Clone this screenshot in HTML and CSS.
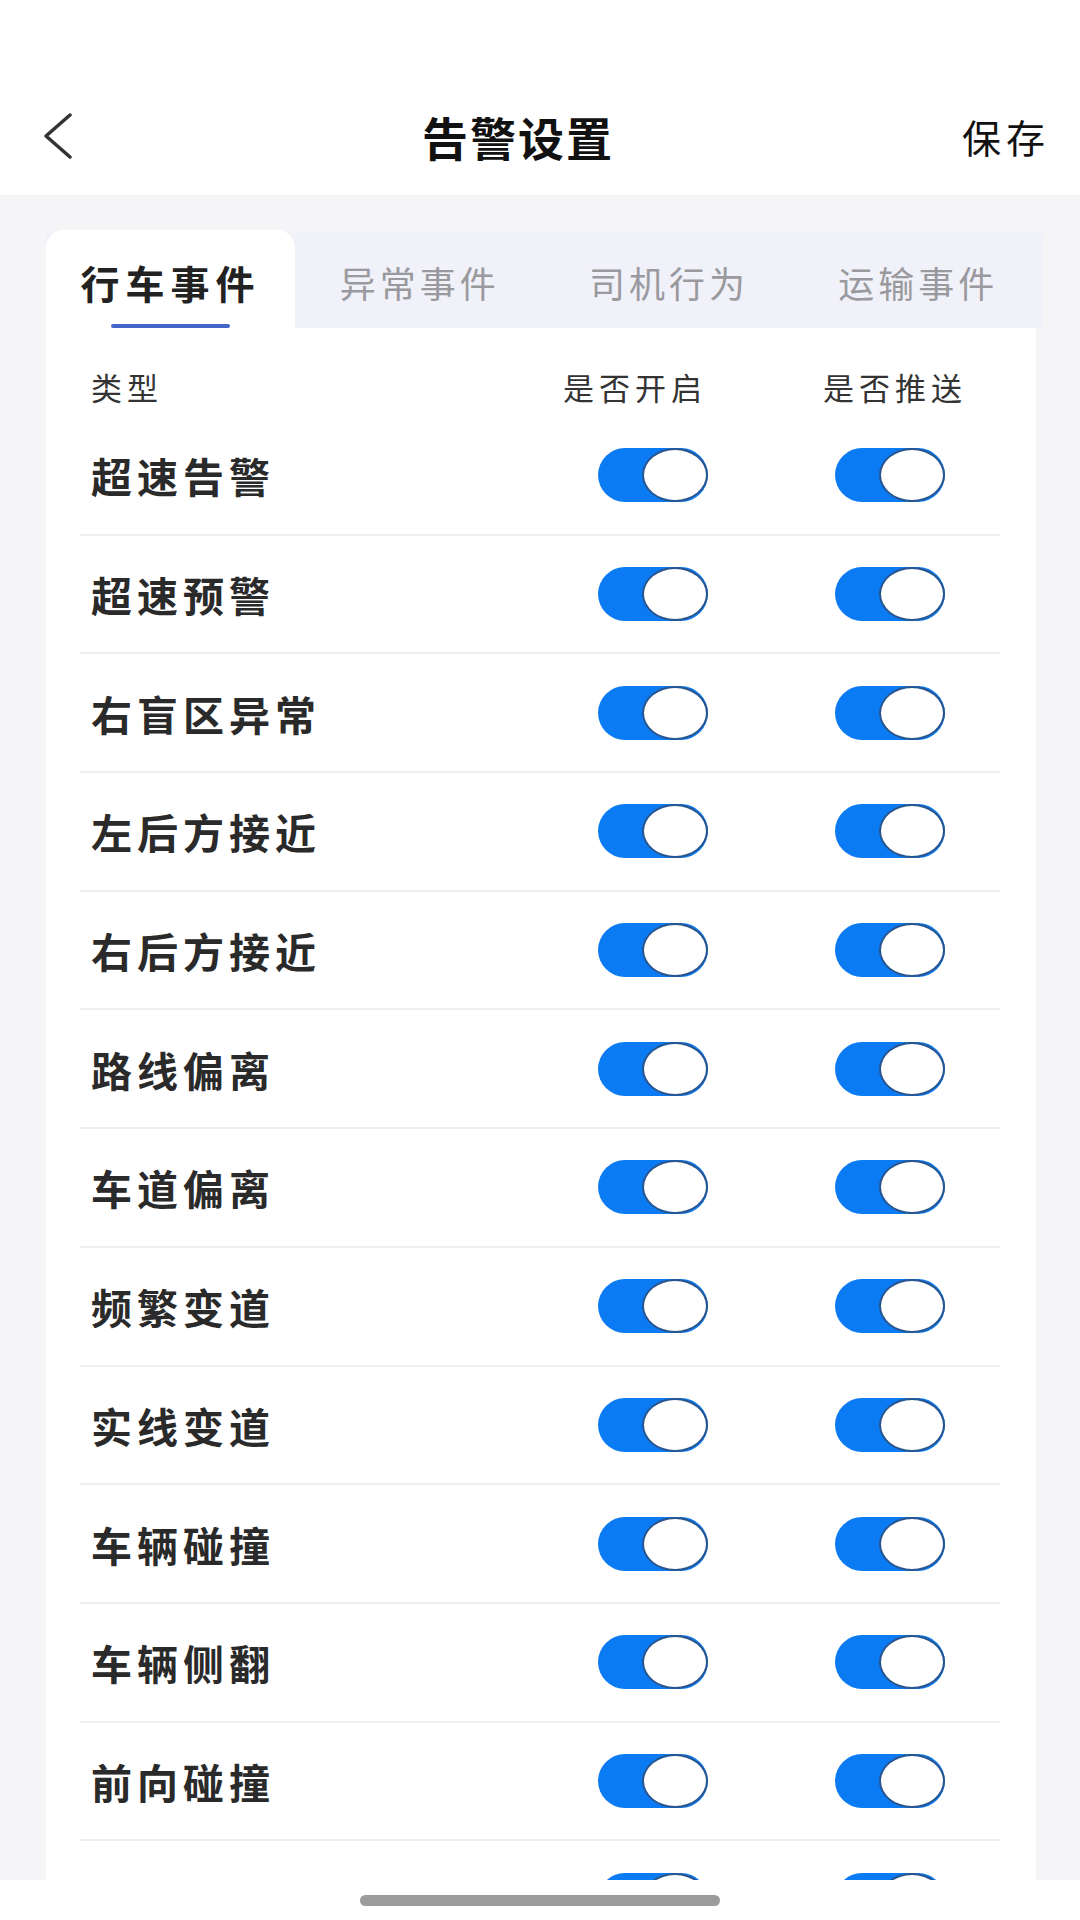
FILE: index.html
```html
<!DOCTYPE html>
<html lang="zh-CN">
<head>
    <meta charset="UTF-8">
    <title>告警设置</title>
    <link rel="stylesheet" href="styles.css">
</head>
<body>
    <div id="header">
        <svg class="back" width="30" height="48" viewBox="0 0 30 48">
            <polyline points="26,3 2,24 26,45" fill="none" stroke="#333" stroke-width="3.5" stroke-linecap="round" stroke-linejoin="round"/>
        </svg>
        <div id="title">告警设置</div>
        <div id="save">保存</div>
    </div>

    <div id="content">
        <div id="tabs">
            <div class="tab active"><span class="tab-label">行车事件</span><span class="tab-bar"></span></div>
            <div class="tab"><span class="tab-label">异常事件</span><span class="tab-bar"></span></div>
            <div class="tab"><span class="tab-label">司机行为</span><span class="tab-bar"></span></div>
            <div class="tab"><span class="tab-label">运输事件</span><span class="tab-bar"></span></div>
        </div>
        <div id="card">
            <div class="list-head">
                <span>类型</span>
                <span>是否开启</span>
                <span>是否推送</span>
            </div>
            <ul id="list"></ul>
        </div>
    </div>

    <div id="home"><span class="home-bar"></span></div>

    <script>
        const events = [
            '超速告警', '超速预警', '右盲区异常', '左后方接近', '右后方接近',
            '路线偏离', '车道偏离', '频繁变道', '实线变道', '车辆碰撞',
            '车辆侧翻', '前向碰撞', ''
        ];

        function makeSwitch() {
            const sw = document.createElement('span');
            sw.classList.add('switch', 'on');
            const knob = document.createElement('span');
            knob.classList.add('knob');
            sw.appendChild(knob);
            sw.onclick = () => sw.classList.toggle('on');
            return sw;
        }

        const list = document.getElementById('list');
        events.forEach(name => {
            const li = document.createElement('li');
            li.classList.add('row');
            const label = document.createElement('span');
            label.classList.add('row-name');
            label.textContent = name;
            li.appendChild(label);
            li.appendChild(makeSwitch());
            li.appendChild(makeSwitch());
            list.appendChild(li);
        });
    </script>
</body>
</html>
```

FILE: styles.css
```css
body {
    margin: 0;
    width: 1080px;
    height: 1920px;
    display: flex;
    flex-direction: column;
    overflow: hidden;
    background-color: #f5f5f7;
    font-family: "Noto Sans CJK SC", sans-serif;
    color: #333;
}

#header {
    height: 90px;
    padding: 91px 30px 14px 44px;
    background: #fff;
    display: flex;
    align-items: center;
    flex-shrink: 0;
}

.back {
    display: block;
}

#title {
    margin-left: 348px;
    font-size: 46px;
    font-weight: 700;
    letter-spacing: 2px;
    color: #111;
}

#save {
    margin-left: auto;
    font-size: 39px;
    letter-spacing: 5px;
    color: #111;
}

#content {
    flex: 1;
    overflow: hidden;
}

#tabs {
    display: grid;
    grid-template-columns: repeat(4, 1fr);
    height: 95px;
    margin: 38px 37px 0 46px;
    background: #f0f1f9;
}

.tab {
    display: flex;
    flex-direction: column;
    align-items: center;
    padding-top: 25px;
    box-sizing: border-box;
}

.tab.active {
    margin-top: -3px;
    padding-top: 28px;
    background: #fff;
    border-radius: 18px 18px 0 0;
}

.tab-label {
    font-size: 36px;
    line-height: 48px;
    letter-spacing: 4px;
    color: #9a9a9e;
}

.tab.active .tab-label {
    font-size: 39px;
    font-weight: 700;
    letter-spacing: 6px;
    color: #222;
}

.tab-bar {
    width: 119px;
    height: 4px;
    margin-top: 18px;
    border-radius: 2px;
}

.tab.active .tab-bar {
    background: #4764c8;
}

#card {
    margin: 0 44px 0 46px;
    background: #fff;
}

.list-head {
    display: grid;
    grid-template-columns: 1fr auto auto;
    column-gap: 116px;
    padding: 38px 69px 9px 45px;
    font-size: 31px;
    line-height: 42px;
    letter-spacing: 5px;
    color: #333;
}

#list {
    list-style: none;
    margin: 0;
    padding: 0 36px 0 34px;
}

.row {
    display: grid;
    grid-template-columns: 1fr 110px 110px;
    column-gap: 127px;
    align-items: center;
    height: 116.7px;
    padding: 0 55px 0 11px;
    border-bottom: 2px solid #eeeeef;
}

.row-name {
    font-size: 41px;
    font-weight: 700;
    letter-spacing: 5px;
    color: #2a2a2a;
}

.switch {
    display: flex;
    justify-content: flex-start;
    width: 110px;
    height: 54px;
    border-radius: 27px;
    background: #d9d9de;
    cursor: pointer;
}

.switch.on {
    justify-content: flex-end;
    background: #0b7bf3;
}

.knob {
    width: 66px;
    height: 54px;
    box-sizing: border-box;
    border-radius: 50%;
    background: #fff;
    border: 2px solid #28558f;
}

#home {
    height: 40px;
    flex-shrink: 0;
    display: flex;
    justify-content: center;
    align-items: center;
    background: #fff;
}

.home-bar {
    width: 360px;
    height: 11px;
    border-radius: 6px;
    background: #9b9b9b;
}
```
